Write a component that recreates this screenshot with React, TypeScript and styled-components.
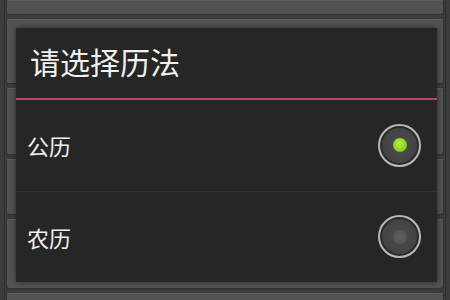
import styled, { createGlobalStyle } from 'styled-components';

const GlobalStyle = createGlobalStyle`
  html, body {
    margin: 0;
    padding: 0;
    background: #3c3c3c;
  }
  body {
    font-family: 'Noto Sans CJK SC', 'Noto Sans', sans-serif;
  }
`;

const Screen = styled.div`
  position: relative;
  width: 450px;
  height: 300px;
  overflow: hidden;
  background: #3c3c3c;
`;

// dimmed list that sits behind the dialog
const Backdrop = styled.div`
  height: 100%;
  margin: 0 4px;
  display: flex;
  flex-direction: column;
  gap: 4px;
  border-left: 1px solid #2e2e2e;
  border-right: 1px solid #2e2e2e;
  padding: 0 1px;
  box-sizing: border-box;
`;

const BackRow = styled.div<{ $h: number }>`
  flex: 0 0 ${p => p.$h}px;
  background: #535353;
  border: 1px solid #333;
  border-top-color: #5e5e5e;
  border-radius: 3px;
  box-sizing: border-box;
`;

const Dialog = styled.div`
  position: absolute;
  left: 16px;
  top: 28px;
  width: 421px;
  height: 254px;
  background: #262626;
  box-shadow: 0 0 6px rgba(0, 0, 0, 0.5);
  display: flex;
  flex-direction: column;
`;

const Title = styled.div`
  height: 72px;
  flex: 0 0 72px;
  display: flex;
  align-items: center;
  padding-left: 14px;
  padding-bottom: 4px;
  box-sizing: border-box;
  font-size: 30px;
  color: #f0f0f0;
  border-bottom: 2px solid #b24c58;
`;

const Option = styled.div<{ $last?: boolean }>`
  flex: 1;
  display: flex;
  align-items: center;
  justify-content: space-between;
  padding: 0 16px 0 11px;
  font-size: 22px;
  color: #f0f0f0;
  border-bottom: ${p => (p.$last ? 'none' : '1px solid #303030')};
`;

const Radio = styled.div<{ $checked: boolean }>`
  width: 43px;
  height: 43px;
  border-radius: 50%;
  box-sizing: border-box;
  border: 2px solid #b8b8b8;
  background: radial-gradient(circle, #4c4c4c 0%, #3e3e3e 100%);
  box-shadow: inset 0 0 0 2px #2a2a2a;
  display: flex;
  align-items: center;
  justify-content: center;
`;

const Dot = styled.div<{ $checked: boolean }>`
  width: 14px;
  height: 14px;
  border-radius: 50%;
  background: ${p =>
    p.$checked
      ? 'radial-gradient(circle at 45% 40%, #b6f04a 0%, #86d21e 60%, #6bb512 100%)'
      : 'radial-gradient(circle, #606060 0%, #4e4e4e 100%)'};
`;

const options = [
  { label: '公历', checked: true },
  { label: '农历', checked: false },
];

const App = () => {
  return (
    <Screen>
      <GlobalStyle />
      <Backdrop>
        <BackRow $h={15} />
        <BackRow $h={65} />
        <BackRow $h={67} />
        <BackRow $h={56} />
        <BackRow $h={70} />
        <BackRow $h={40} />
      </Backdrop>
      <Dialog>
        <Title>请选择历法</Title>
        {options.map((o, i) => (
          <Option key={o.label} $last={i === options.length - 1}>
            <span>{o.label}</span>
            <Radio $checked={o.checked}>
              <Dot $checked={o.checked} />
            </Radio>
          </Option>
        ))}
      </Dialog>
    </Screen>
  );
};

export default App;
